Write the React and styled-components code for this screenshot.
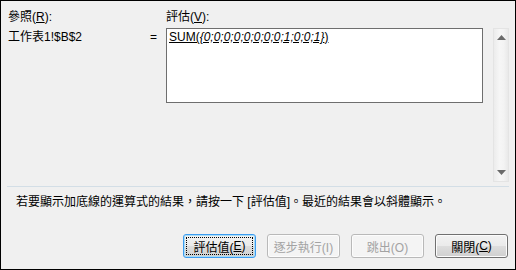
import React from "react";
import styled, { createGlobalStyle } from "styled-components";

const GlobalStyle = createGlobalStyle`
  html, body {
    margin: 0;
    padding: 0;
    background: #f0f0f0;
  }
  * {
    box-sizing: border-box;
  }
`;

const Dialog = styled.div`
  width: 516px;
  height: 270px;
  border: 1px solid #000;
  background: #f0f0f0;
  font-family: "Liberation Sans", "Noto Sans CJK TC", sans-serif;
  font-size: 12px;
  color: #000;
  display: flex;
  flex-direction: column;
  padding-top: 8px;
`;

const Top = styled.div`
  display: flex;
  padding-left: 7px;
`;

const RefColumn = styled.div`
  width: 158px;
  padding-right: 9px;
`;

const Label = styled.div`
  height: 16px;
  line-height: 16px;
  white-space: nowrap;
`;

const Key = styled.span`
  text-decoration: underline;
`;

const RefRow = styled.div`
  display: flex;
  justify-content: space-between;
  height: 16px;
  line-height: 16px;
  margin-top: 4px;
`;

const EvalColumn = styled.div`
  display: flex;
  flex-direction: column;
`;

const EvalRow = styled.div`
  display: flex;
  align-items: flex-start;
  margin-top: 3px;
`;

const EvalBox = styled.div`
  width: 317px;
  height: 75px;
  background: #fff;
  border: 1px solid #6e6e6e;
  padding: 1px 2px;
  line-height: 15px;
  white-space: nowrap;
`;

const Formula = styled.span`
  text-decoration: underline;
`;

const Italic = styled.i`
  font-style: italic;
`;

const ScrollBar = styled.div`
  width: 16px;
  height: 154px;
  margin-left: 10px;
  border: 1px solid #e4e4e4;
  background: linear-gradient(to right, #ececec, #f6f6f6 40%, #f3f3f3 70%, #e9e9e9);
  display: flex;
  flex-direction: column;
  justify-content: space-between;
  align-items: center;
  padding: 6px 0 6px;
`;

const Separator = styled.div`
  height: 1px;
  margin: 4px 6px 0 6px;
  background: #d3dee6;
`;

const Hint = styled.div`
  margin-top: 7px;
  padding-left: 15px;
  height: 16px;
  line-height: 16px;
  white-space: nowrap;
`;

const Buttons = styled.div`
  display: flex;
  justify-content: flex-end;
  gap: 11px;
  margin-top: 24px;
  padding-right: 7px;
`;

const Button = styled.div`
  position: relative;
  width: 73px;
  height: 24px;
  border-radius: 3px;
  display: flex;
  align-items: center;
  justify-content: center;
  white-space: nowrap;
  border: 1px solid ${({ $focused, disabled }) =>
    $focused ? "#3c9cf0" : disabled ? "#b9b9b9" : "#707070"};
  color: ${({ disabled }) => (disabled ? "#a3a3a3" : "#000")};
  background: ${({ disabled }) =>
    disabled
      ? "#f4f4f4"
      : "linear-gradient(#f2f2f2, #ebebeb 48%, #dddddd 52%, #cfcfcf)"};
  box-shadow: ${({ $focused }) =>
    $focused ? "inset 0 0 0 1px #a7dcf8" : "inset 0 0 0 1px #fcfcfc"};
`;

const FocusRing = styled.span`
  position: absolute;
  inset: 2px;
  border: 1px dotted #000;
  pointer-events: none;
`;

const Arrow = ({ up }) => (
  <svg width="9" height="5" viewBox="0 0 9 5">
    <polygon
      points={up ? "4.5,0 9,5 0,5" : "0,0 9,0 4.5,5"}
      fill="#6a6a6a"
    />
  </svg>
);

export default function App() {
  return (
    <>
      <GlobalStyle />
      <Dialog>
        <Top>
          <RefColumn>
            <Label>
              參照(<Key>R</Key>):
            </Label>
            <RefRow>
              <span>工作表1!$B$2</span>
              <span>=</span>
            </RefRow>
          </RefColumn>
          <EvalColumn>
            <Label>
              評估(<Key>V</Key>):
            </Label>
            <EvalRow>
              <EvalBox>
                <Formula>
                  SUM(<Italic>{"{0;0;0;0;0;0;0;0;1;0;0;1}"}</Italic>)
                </Formula>
              </EvalBox>
              <ScrollBar>
                <Arrow up />
                <Arrow />
              </ScrollBar>
            </EvalRow>
          </EvalColumn>
        </Top>
        <Separator />
        <Hint>若要顯示加底線的運算式的結果，請按一下 [評估值]。最近的結果會以斜體顯示。</Hint>
        <Buttons>
          <Button $focused>
            <FocusRing />
            評估值(<Key>E</Key>)
          </Button>
          <Button disabled>逐步執行(I)</Button>
          <Button disabled>跳出(O)</Button>
          <Button>
            關閉(<Key>C</Key>)
          </Button>
        </Buttons>
      </Dialog>
    </>
  );
}
